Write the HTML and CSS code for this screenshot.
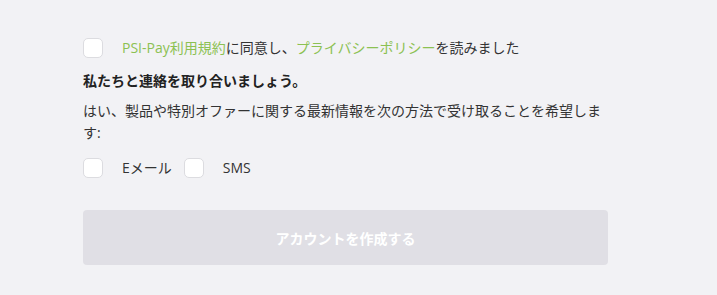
FILE: index.html
```html
<!DOCTYPE html>
<html lang="ja">
<head>
    <meta charset="UTF-8">
    <title>アカウントを作成する</title>
    <link rel="stylesheet" href="styles.css">
</head>
<body>
    <form class="signup">
        <label class="check-row">
            <span class="box"></span>
            <span><a href="#">PSI-Pay利用規約</a>に同意し、<a href="#">プライバシーポリシー</a>を読みました</span>
        </label>

        <h2>私たちと連絡を取り合いましょう。</h2>
        <p>はい、製品や特別オファーに関する最新情報を次の方法で受け取ることを希望します:</p>

        <div class="options">
            <label class="check-row">
                <span class="box"></span>
                <span>Eメール</span>
            </label>
            <label class="check-row">
                <span class="box"></span>
                <span>SMS</span>
            </label>
        </div>

        <button type="button" class="submit" disabled>アカウントを作成する</button>
    </form>
</body>
</html>
```

FILE: styles.css
```css
* {
    box-sizing: border-box;
    margin: 0;
    padding: 0;
}

:root {
    --bg-color: #f2f2f5;
    --text-color: #333333;
    --link-color: #8cc152;
    --box-border: #dcdce0;
    --button-bg: #e0dfe5;
}

body {
    background-color: var(--bg-color);
    color: var(--text-color);
    font-family: "Open Sans", "Noto Sans CJK JP", sans-serif;
    font-size: 14px;
    line-height: 22px;
}

.signup {
    width: 525px;
    margin-left: 83px;
    padding-top: 37px;
}

.check-row {
    display: flex;
    align-items: center;
    gap: 19px;
    cursor: pointer;
}

.box {
    width: 20px;
    height: 20px;
    background-color: #ffffff;
    border: 1px solid var(--box-border);
    border-radius: 5px;
    flex-shrink: 0;
}

a {
    color: var(--link-color);
    text-decoration: none;
}

h2 {
    margin-top: 11px;
    font-size: 14px;
    font-weight: bold;
    color: #222222;
}

p {
    margin-top: 8px;
}

.options {
    display: flex;
    gap: 12px;
    margin-top: 13px;
}

.submit {
    display: block;
    width: 100%;
    height: 55px;
    margin-top: 31px;
    border: none;
    border-radius: 4px;
    background-color: var(--button-bg);
    color: #ffffff;
    font-family: inherit;
    font-size: 14px;
    font-weight: bold;
}
```
